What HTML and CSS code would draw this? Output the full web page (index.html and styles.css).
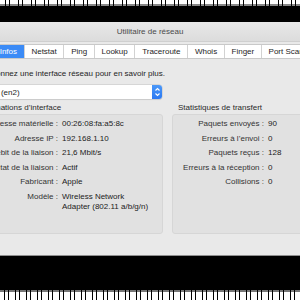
FILE: index.html
```html
<!DOCTYPE html>
<html lang="fr">
<head>
    <meta charset="UTF-8">
    <title>Utilitaire de réseau</title>
    <link rel="stylesheet" href="styles.css">
</head>
<body>
    <div class="noise"></div>
    <div class="window">
        <div class="titlebar">Utilitaire de réseau</div>
        <div class="content">
            <div class="tabs">
                <span class="tab active">Infos</span>
                <span class="tab">Netstat</span>
                <span class="tab">Ping</span>
                <span class="tab">Lookup</span>
                <span class="tab">Traceroute</span>
                <span class="tab">Whois</span>
                <span class="tab">Finger</span>
                <span class="tab">Port Scan</span>
            </div>
            <p class="intro">Sélectionnez une interface réseau pour en savoir plus.</p>
            <div class="popup">
                <span class="popup-label">Wi-Fi (en2)</span>
                <span class="stepper">
                    <svg width="9" height="14" viewBox="0 0 9 14">
                        <path d="M2.5 5.5 L4.5 3.5 L6.5 5.5 M2.5 8.5 L4.5 10.5 L6.5 8.5" fill="none" stroke="#fff" stroke-width="1.1"/>
                    </svg>
                </span>
            </div>
            <div class="groups">
                <section class="group">
                    <h4>Informations d’interface</h4>
                    <dl class="box rows left">
                        <dt>Adresse matérielle :</dt><dd>00:26:08:fa:a5:8c</dd>
                        <dt>Adresse IP :</dt><dd>192.168.1.10</dd>
                        <dt>Débit de la liaison :</dt><dd>21,6 Mbit/s</dd>
                        <dt>État de la liaison :</dt><dd>Actif</dd>
                        <dt>Fabricant :</dt><dd>Apple</dd>
                        <dt>Modèle :</dt><dd>Wireless Network<br>Adapter (802.11 a/b/g/n)</dd>
                    </dl>
                </section>
                <section class="group">
                    <h4>Statistiques de transfert</h4>
                    <dl class="box rows right">
                        <dt>Paquets envoyés :</dt><dd>90</dd>
                        <dt>Erreurs à l’envoi :</dt><dd>0</dd>
                        <dt>Paquets reçus :</dt><dd>128</dd>
                        <dt>Erreurs à la réception :</dt><dd>0</dd>
                        <dt>Collisions :</dt><dd>0</dd>
                    </dl>
                </section>
            </div>
        </div>
    </div>
    <div class="noise bottom"></div>
</body>
</html>
```

FILE: styles.css
```css
body {
    margin: 0;
    width: 300px;
    height: 300px;
    overflow: hidden;
    background: #000;
    font-family: "Liberation Sans", Arial, sans-serif;
    font-size: 8px;
    color: #222;
    display: flex;
    flex-direction: column;
}
.noise {
    height: 6px;
    flex: none;
    background:
        repeating-linear-gradient(90deg, transparent 0 5px, #000 5px 6px, transparent 6px 9px, #000 9px 10px, transparent 10px 13px),
        linear-gradient(#fff 0 4px, #888 4px 6px);
}
.noise.bottom {
    margin-top: auto;
    height: 10px;
    background:
        repeating-linear-gradient(90deg, transparent 0 4px, #000 4px 5px, transparent 5px 8px, #000 8px 9px, transparent 9px 11px),
        linear-gradient(#777 0 2px, #fff 2px);
}
.window {
    flex: none;
    margin: 16px 0 0 -40px;
    width: 380px;
    height: 233px;
    background: #e9e9e9;
    border-bottom: 1px solid #8e8e8e;
    display: flex;
    flex-direction: column;
}
.titlebar {
    height: 19px;
    line-height: 19px;
    text-align: center;
    color: #4a4a4a;
    background: linear-gradient(#e8e8e8, #dcdcdc);
    border-bottom: 1px solid #cfcfcf;
}
.content {
    flex: 1;
    padding: 2px 12px 0;
    display: flex;
    flex-direction: column;
    align-items: flex-start;
}
.tabs {
    display: flex;
    background: #fff;
    border: 1px solid #c9c9c9;
    border-radius: 3px;
    height: 13px;
    margin-left: 20px;
}
.tab {
    padding: 0 6.7px;
    line-height: 13px;
    color: #1e1e1e;
    white-space: nowrap;
    border-left: 1px solid #d2d2d2;
}
.tab:first-child {
    border-left: none;
}
.tab.active {
    background: #3b8bf6;
    color: #fff;
    border-radius: 2px 0 0 2px;
}
.intro {
    margin: 10px 0 0;
    line-height: 10px;
    color: #1e1e1e;
}
.popup {
    margin-top: 6px;
    width: 190px;
    height: 14px;
    display: flex;
    align-items: center;
    background: #fff;
    border-radius: 3px;
    box-shadow: 0 0 0 0.5px #c4c4c4, 0 1px 1px rgba(0, 0, 0, 0.1);
}
.popup-label {
    flex: 1;
    padding-left: 8px;
    color: #1e1e1e;
}
.stepper {
    width: 10px;
    height: 14px;
    background: linear-gradient(#4b98f8, #2a78f2);
    border-radius: 0 3px 3px 0;
    display: flex;
    justify-content: center;
}
.groups {
    margin-top: 4px;
    display: grid;
    grid-template-columns: 191px 156px;
    column-gap: 9px;
}
.group h4 {
    margin: 0 0 1px 6px;
    font-weight: normal;
    line-height: 10px;
    color: #2a2a2a;
}
.box {
    margin: 0;
    height: 114px;
    padding-top: 4px;
    background: #e1e1e1;
    border: 1px solid #d6d6d6;
    border-radius: 3px;
}
.rows {
    display: grid;
    row-gap: 4.5px;
    align-content: start;
    line-height: 10px;
}
.rows.left {
    grid-template-columns: 85px auto;
}
.rows.right {
    grid-template-columns: 91px auto;
}
.rows dt {
    text-align: right;
    white-space: nowrap;
    color: #333;
}
.rows dd {
    margin: 0 0 0 4px;
    color: #222;
}
```
